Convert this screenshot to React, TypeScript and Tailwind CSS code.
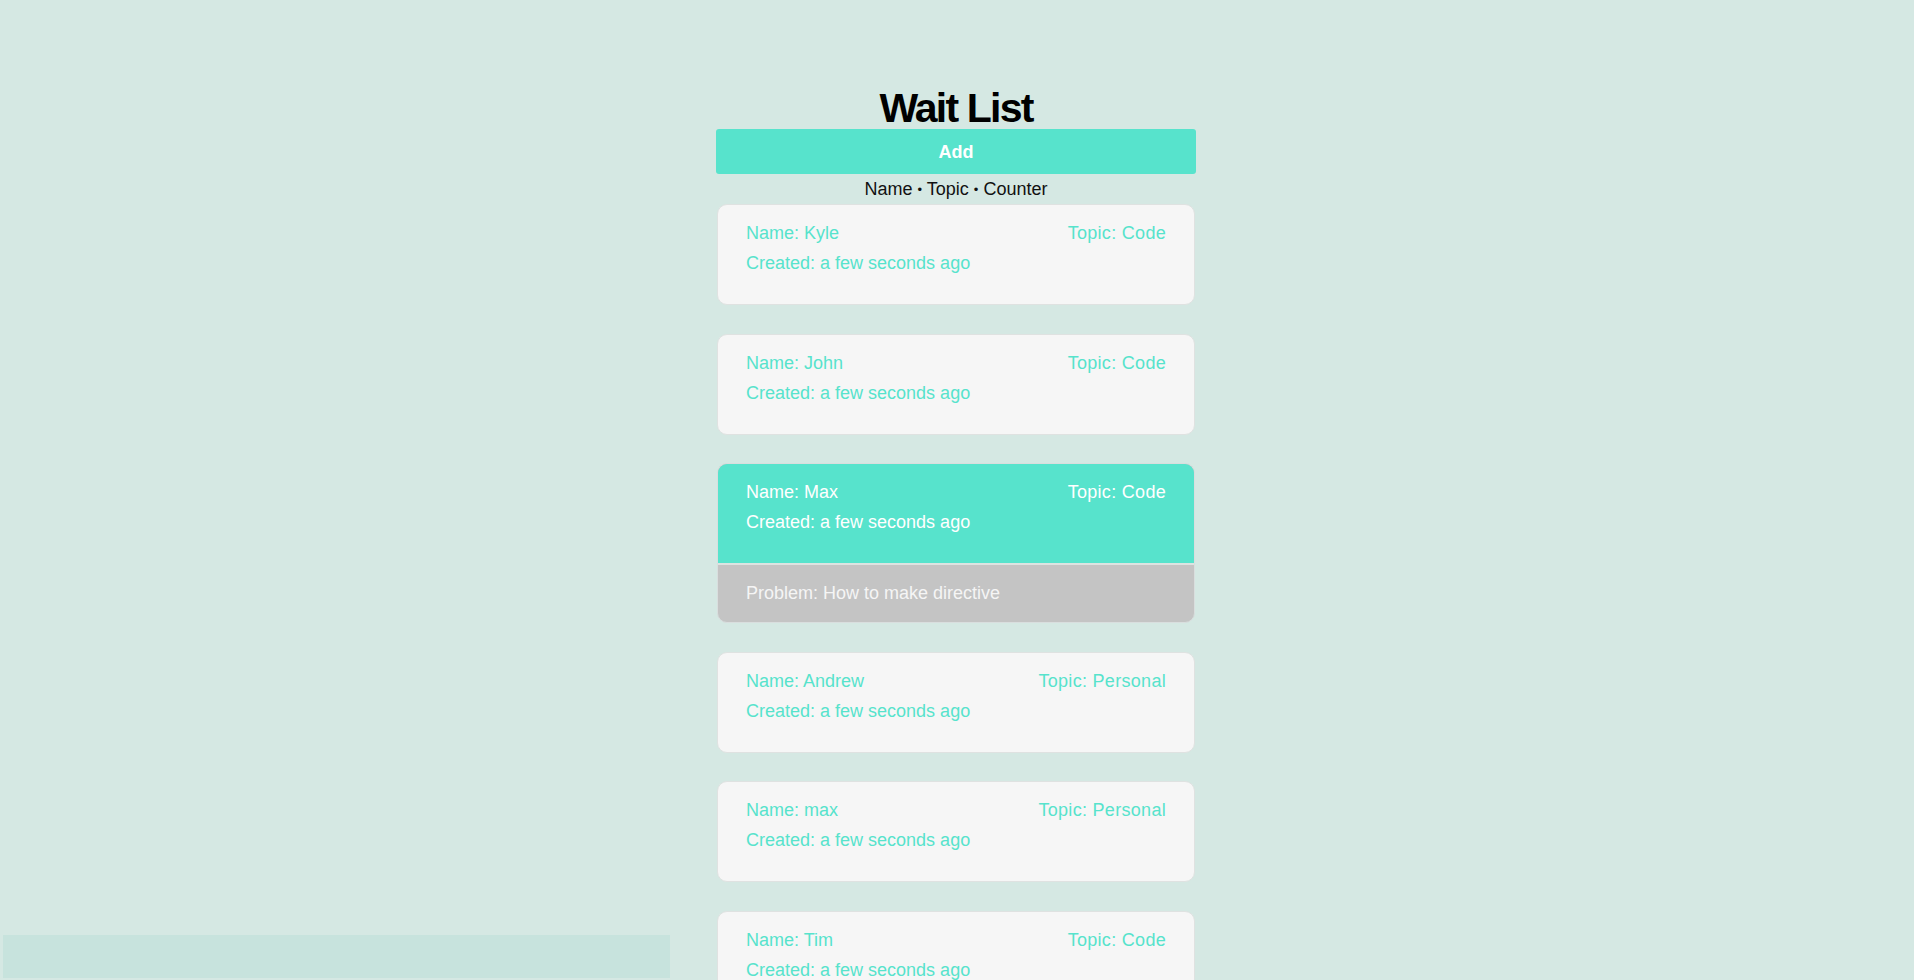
import React from "react";

type Entry = {
  name: string;
  topic: string;
  created: string;
  problem?: string;
};

const entries: Entry[] = [
  { name: "Kyle", topic: "Code", created: "a few seconds ago" },
  { name: "John", topic: "Code", created: "a few seconds ago" },
  { name: "Max", topic: "Code", created: "a few seconds ago", problem: "How to make directive" },
  { name: "Andrew", topic: "Personal", created: "a few seconds ago" },
  { name: "max", topic: "Personal", created: "a few seconds ago" },
  { name: "Tim", topic: "Code", created: "a few seconds ago" },
];

const Card = ({ entry }: { entry: Entry }) => {
  const open = !!entry.problem;

  return (
    <div
      className={`overflow-hidden rounded-[10px] border ${
        open ? "border-[#d9dede] bg-[#c4c4c4]" : "border-[#dfe2e1] bg-[#f6f6f6]"
      }`}
    >
      <div
        className={`px-[28px] pt-[13px] pb-[26px] text-[18px] leading-[30px] ${
          open ? "bg-[#57e3cc] text-white" : "text-[#57e3cc]"
        }`}
      >
        <div className="flex items-center justify-between">
          <span>Name: {entry.name}</span>
          <span className="tracking-[0.3px]">Topic: {entry.topic}</span>
        </div>
        <div>Created: {entry.created}</div>
      </div>
      {open && (
        <div className="border-t-2 border-[#dde3e1] px-[28px] pt-[13px] pb-[14px] text-[18px] leading-[30px] text-[#f5f5f5]">
          Problem: {entry.problem}
        </div>
      )}
    </div>
  );
};

export default function App() {
  return (
    <div className="relative h-screen overflow-hidden bg-[#d5e8e3] font-['Liberation_Sans',Arial,sans-serif]">
      <main className="ml-[calc(50%-241px)] w-[480px] pt-[87px]">
        <h1 className="text-center text-[41px] font-bold leading-[42px] tracking-[-1.8px] text-black">
          Wait List
        </h1>

        <button className="h-[45px] w-full rounded-[3px] bg-[#57e3cc] pt-[2px] text-[18px] font-bold text-white">
          Add
        </button>

        <p className="h-[30px] overflow-hidden text-center text-[18px] leading-[30px] text-[#111]">
          Name <span className="align-[1px] text-[13px] leading-none">•</span> Topic{" "}
          <span className="align-[1px] text-[13px] leading-none">•</span> Counter
        </p>

        <div className="mx-px flex flex-col gap-[28.5px]">
          {entries.map((e, i) => (
            <Card key={i} entry={e} />
          ))}
        </div>
      </main>

      {/* bottom-left bar */}
      <div className="absolute bottom-[2px] left-[3px] h-[43px] w-[667px] bg-[#c7e3dd]" />
    </div>
  );
}
